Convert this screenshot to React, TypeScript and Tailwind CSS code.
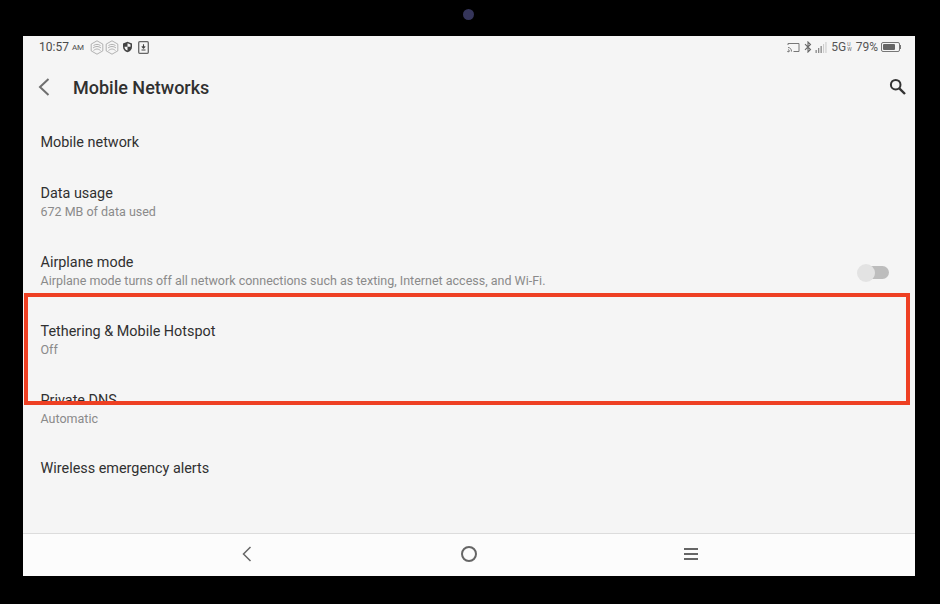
const rows = [
  { title: 'Data usage', sub: '672 MB of data used' },
  {
    title: 'Airplane mode',
    sub: 'Airplane mode turns off all network connections such as texting, Internet access, and Wi-Fi.',
    toggle: true,
  },
  { title: 'Tethering & Mobile Hotspot', sub: 'Off' },
  { title: 'Private DNS', sub: 'Automatic' },
]

function HexIcon() {
  return (
    <svg width="14" height="15" viewBox="0 0 14 15" fill="none" stroke="#a0a0a0" strokeWidth="0.8">
      <path d="M7 .8l5.800 3.300v6.800L7 14.200 1.200 10.900V4.100z" />
      <path d="M3.500 5.500C6 4 8 4 10.500 5.500M3 8c2.500-2 5.500-2 8 0M3.500 10.500C6 8.500 8 8.500 10.500 10.500" />
    </svg>
  )
}

function StatusLeft() {
  return (
    <div className="flex items-center">
      <span className="text-[12px] text-[#4a4a4a]">10:57</span>
      <span className="ml-[3px] mt-[2px] text-[8px] text-[#4a4a4a]">AM</span>
      <div className="ml-[6px] flex items-center gap-[1px]">
        <HexIcon />
        <HexIcon />
      </div>
      <svg className="ml-[3px]" width="11" height="12" viewBox="0 0 11 12">
        <path d="M5.500 .8l4.500 1.700v3.200c0 2.800-1.900 4.800-4.500 5.600C2.900 10.500 1 8.500 1 5.700V2.500z" fill="#444" />
        <path d="M5.500 2.300l3 1.100v2.300H5.500zM5.500 5.700v3.900C3.800 9 2.500 7.600 2.500 5.700z" fill="#f5f5f5" />
      </svg>
      <svg className="ml-[5px]" width="11" height="13" viewBox="0 0 11 13">
        <rect x="0.700" y="0.700" width="9.600" height="11.600" rx="1" fill="none" stroke="#666" strokeWidth="1.300" />
        <path d="M5.500 3.200v3.500M3.800 5.300l1.700 1.900 1.700-1.900M3.500 9h4" stroke="#444" strokeWidth="1.100" fill="none" />
      </svg>
    </div>
  )
}

function StatusRight() {
  return (
    <div className="flex items-center">
      <svg width="13" height="11" viewBox="0 0 13 11" fill="none" stroke="#777" strokeWidth="1">
        <path d="M1 3V1.500h11v8H6.500" />
        <path d="M1 5.500c2 0 3.500 1.500 3.500 4M1 7.700c.9 0 1.600.8 1.600 1.800" />
        <circle cx="1.200" cy="9.500" r=".5" fill="#777" />
      </svg>
      <svg className="ml-[4px]" width="8" height="12" viewBox="0 0 8 12" fill="none" stroke="#666" strokeWidth="1.100">
        <path d="M1 3.200l5.500 5.300L4 11V1l2.500 2.500L1 8.800" />
      </svg>
      <svg className="ml-[3px]" width="12" height="11" viewBox="0 0 12 11">
        <rect x="0.500" y="8" width="1.300" height="3" fill="#888" />
        <rect x="3" y="6" width="1.300" height="5" fill="#888" />
        <rect x="5.500" y="4" width="1.300" height="7" fill="#888" />
        <rect x="8" y="2" width="1.100" height="9" fill="#ccc" />
        <rect x="10.400" y="0" width="1.100" height="11" fill="#ccc" />
      </svg>
      <span className="ml-[4px] text-[12px] text-[#555]">5G</span>
      <span className="ml-[1px] flex flex-col text-[5px] leading-[5px] text-[#666]">
        <span>U</span>
        <span>W</span>
      </span>
      <span className="ml-[4px] text-[12px] text-[#555]">79%</span>
      <div className="ml-[3px] flex items-center">
        <div className="h-[10px] w-[19px] rounded-[2px] border border-[#777] p-[1px]">
          <div className="h-full w-[78%] rounded-[1px] bg-[#666]" />
        </div>
        <div className="h-[4px] w-[1px] bg-[#777]" />
      </div>
    </div>
  )
}

function Row({ title, sub, toggle }: { title: string; sub: string; toggle?: boolean }) {
  return (
    <div className="flex h-[69px] items-center justify-between pr-[26px] pl-[17.5px]">
      <div className="pb-[3px]">
        <div className="text-[14.4px] leading-[20px] text-[#303030]">{title}</div>
        <div className="mt-[-1px] text-[12.5px] leading-[18px] text-[#8a8a8a]">{sub}</div>
      </div>
      {toggle && (
        <div className="relative h-[13px] w-[32px] self-center">
          <div className="absolute top-0 left-[4px] h-[13px] w-[28px] rounded-full bg-[#bdbdbd]" />
          <div className="absolute top-[-2px] left-0 h-[18px] w-[18px] rounded-full bg-[#e3e3e3]" />
        </div>
      )}
    </div>
  )
}

export default function App() {
  return (
    <div className="relative h-[604px] w-[940px] bg-black pt-[36px] pl-[23px] font-['Roboto',sans-serif]">
      <div className="absolute top-[8.500px] left-[462.500px] h-[11px] w-[11px] rounded-full bg-[#35355a]" />

      <div className="flex h-[540px] w-[892px] flex-col bg-[#f5f5f5]">
        {/* Status bar */}
        <div className="flex h-[22px] items-center justify-between pr-[14px] pl-[16px]">
          <StatusLeft />
          <StatusRight />
        </div>

        {/* Title bar */}
        <div className="flex h-[58px] items-center pr-[9px] pl-[15px]">
          <svg width="12" height="18" viewBox="0 0 12 18" fill="none" stroke="#6f6f6f" strokeWidth="2">
            <path d="M10.500 1L2 9l8.500 8" />
          </svg>
          <span className="ml-[23px] text-[18px] font-medium text-[#303030]">Mobile Networks</span>
          <svg className="mt-[-2px] ml-auto" width="17" height="17" viewBox="0 0 17 17" fill="none" stroke="#333" strokeWidth="2">
            <circle cx="6.700" cy="6.700" r="4.800" />
            <path d="M10.300 10.300l5.700 5.700" strokeWidth="2.400" />
          </svg>
        </div>

        {/* List */}
        <div className="flex-1 pt-[1px]">
          <div className="flex h-[52px] items-center pl-[17.500px] text-[14.4px] text-[#303030]">Mobile network</div>
          {rows.map((r) => (
            <Row key={r.title} {...r} />
          ))}
          <div className="flex h-[48px] items-center pl-[17.500px] text-[14.4px] text-[#303030]">
            Wireless emergency alerts
          </div>
        </div>

        {/* Nav bar */}
        <div className="flex h-[43px] items-center justify-between border-t border-[#dcdcdc] bg-[#fcfcfc] pr-[217px] pb-[2px] pl-[219px]">
          <svg width="10" height="16" viewBox="0 0 10 16" fill="none" stroke="#666" strokeWidth="1.500">
            <path d="M8.500 1L1.500 8l7 7" />
          </svg>
          <div className="ml-[1px] h-[16px] w-[16px] rounded-full border-2 border-[#666]" />
          <div className="flex w-[14px] flex-col gap-[3px]">
            <div className="h-[2px] bg-[#666]" />
            <div className="h-[2px] bg-[#666]" />
            <div className="h-[2px] bg-[#666]" />
          </div>
        </div>
      </div>

      {/* highlight box */}
      <div className="absolute top-[293px] left-[24px] h-[112px] w-[886px] border-4 border-[#ee4023]" />
    </div>
  )
}
